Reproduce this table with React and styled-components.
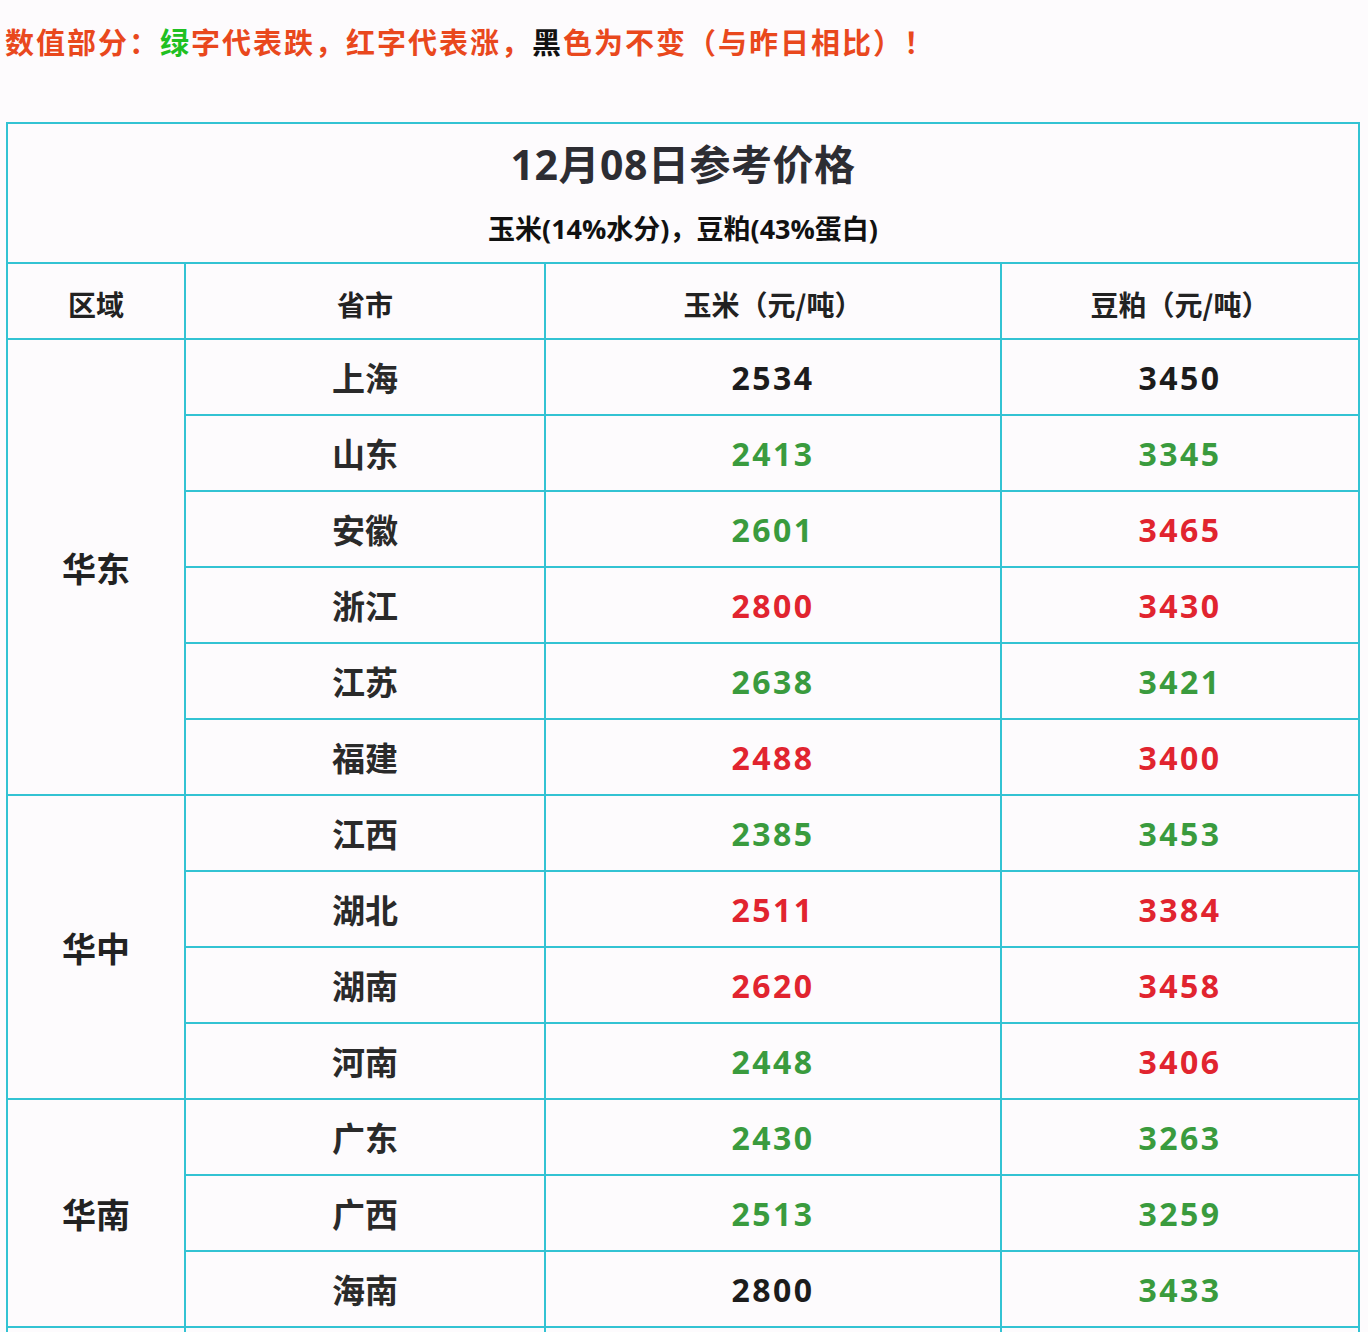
import React from 'react'
import { styled, createGlobalStyle } from 'styled-components'

const GlobalStyle = createGlobalStyle`
  body {
    margin: 0;
    background: #fdfbfd;
    font-family: "Open Sans", "Noto Sans CJK SC", sans-serif;
  }
`

const regions = [
  {
    name: '华东',
    rows: [
      ['上海', '2534', 'black', '3450', 'black'],
      ['山东', '2413', 'green', '3345', 'green'],
      ['安徽', '2601', 'green', '3465', 'red'],
      ['浙江', '2800', 'red', '3430', 'red'],
      ['江苏', '2638', 'green', '3421', 'green'],
      ['福建', '2488', 'red', '3400', 'red'],
    ],
  },
  {
    name: '华中',
    rows: [
      ['江西', '2385', 'green', '3453', 'green'],
      ['湖北', '2511', 'red', '3384', 'red'],
      ['湖南', '2620', 'red', '3458', 'red'],
      ['河南', '2448', 'green', '3406', 'red'],
    ],
  },
  {
    name: '华南',
    rows: [
      ['广东', '2430', 'green', '3263', 'green'],
      ['广西', '2513', 'green', '3259', 'green'],
      ['海南', '2800', 'black', '3433', 'green'],
    ],
  },
]

const colors = {
  black: '#1c1c1c',
  green: '#3a9b3e',
  red: '#e1242f',
}

const App = () => {
  return (
    <Wrapper>
      <GlobalStyle />
      <Notice>
        数值部分：<Green>绿</Green>字代表跌，红字代表涨，<Black>黑</Black>色为不变（与昨日相比）！
      </Notice>

      <PriceTable>
        <colgroup>
          <col style={{ width: 178 }} />
          <col style={{ width: 360 }} />
          <col style={{ width: 456 }} />
          <col style={{ width: 358 }} />
        </colgroup>
        <thead>
          <tr>
            <TitleCell colSpan={4}>
              <Title>12月08日参考价格</Title>
              <Subtitle>玉米(14%水分)，豆粕(43%蛋白)</Subtitle>
            </TitleCell>
          </tr>
          <tr>
            <HeadCell>区域</HeadCell>
            <HeadCell>省市</HeadCell>
            <HeadCell>玉米（元/吨）</HeadCell>
            <HeadCell>豆粕（元/吨）</HeadCell>
          </tr>
        </thead>
        <tbody>
          {regions.map((region) =>
            region.rows.map((row, i) => (
              <tr key={row[0]}>
                {i === 0 && <RegionCell rowSpan={region.rows.length}>{region.name}</RegionCell>}
                <CityCell>{row[0]}</CityCell>
                <NumCell $tone={row[2]}>{row[1]}</NumCell>
                <NumCell $tone={row[4]}>{row[3]}</NumCell>
              </tr>
            ))
          )}
          <tr>
            <RegionCell />
            <CityCell />
            <NumCell />
            <NumCell />
          </tr>
        </tbody>
      </PriceTable>
    </Wrapper>
  )
}

const Wrapper = styled.section`
  width: 1368px;
  height: 1332px;
  overflow: hidden;
`

const Notice = styled.div`
  padding: 21px 0 0 5px;
  height: 122px;
  box-sizing: border-box;
  font-family: "Noto Sans CJK SC", sans-serif;
  font-weight: 700;
  font-size: 29px;
  line-height: 40px;
  color: #e9481d;
  letter-spacing: 2px;
`

const Green = styled.span`
  color: #1fc022;
`

const Black = styled.span`
  color: #111;
`

const PriceTable = styled.table`
  margin-left: 6px;
  width: 1354px;
  border-collapse: collapse;
  table-layout: fixed;

  td, th {
    border: 2px solid #33c3d3;
    text-align: center;
    padding: 0;
  }
`

const TitleCell = styled.th`
  height: 138px;
  vertical-align: top;
`

const Title = styled.div`
  margin-top: 16px;
  font-family: "Open Sans", "Noto Sans CJK SC", sans-serif;
  font-weight: 700;
  font-size: 41px;
  line-height: 48px;
  color: #2d2d33;
  letter-spacing: 0.5px;
`

const Subtitle = styled.div`
  margin-top: 24px;
  font-family: "Open Sans", "Noto Sans CJK SC", sans-serif;
  font-weight: 700;
  font-size: 27px;
  line-height: 34px;
  color: #111;
`

const HeadCell = styled.th`
  height: 68px;
  font-family: "Noto Sans CJK SC", sans-serif;
  font-weight: 700;
  font-size: 28px;
  color: #222;

  && {
    padding-top: 6px;
  }
`

const RegionCell = styled.td`
  font-family: "Noto Sans CJK SC", sans-serif;
  font-weight: 700;
  font-size: 34px;
  color: #222;
`

const CityCell = styled.td`
  height: 74px;
  font-family: "Noto Sans CJK SC", sans-serif;
  font-weight: 700;
  font-size: 33px;
  color: #2a2a2a;
`

const NumCell = styled.td`
  font-family: "Open Sans", sans-serif;
  font-weight: 700;
  font-size: 32px;
  letter-spacing: 2.5px;
  color: ${(p) => colors[p.$tone] || '#222'};
`

export default App
